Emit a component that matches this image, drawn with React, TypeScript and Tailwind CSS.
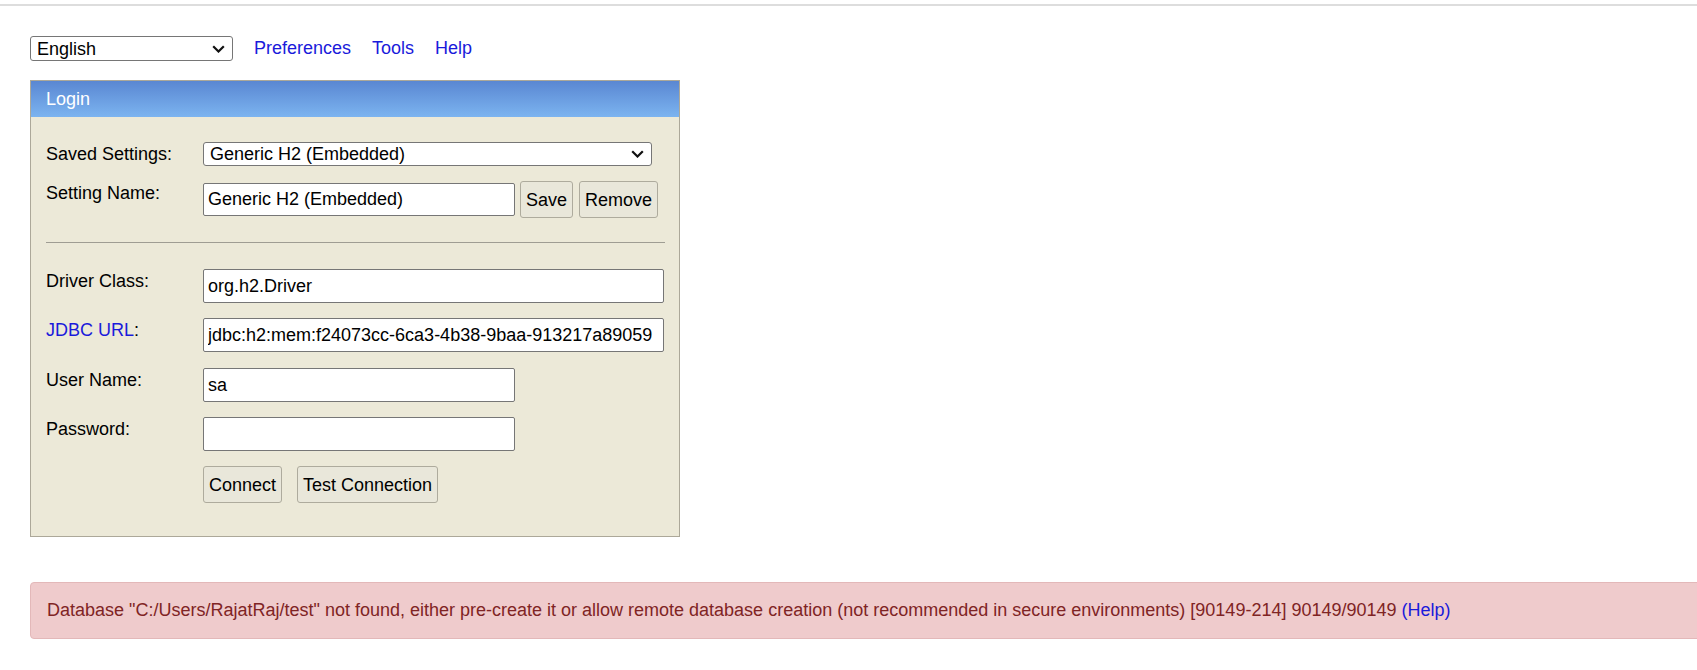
import { useState } from "react"

function Chevron() {
  return (
    <svg width="13" height="8" viewBox="0 0 13 8" className="shrink-0">
      <path d="M1.2 1.2 L6.5 6.5 L11.8 1.2" fill="none" stroke="#111" strokeWidth="2.2" />
    </svg>
  )
}

function FakeSelect({ value, className }: { value: string; className: string }) {
  return (
    <div
      className={`flex items-center justify-between bg-white border border-[#767676] rounded-[3px] pl-[6px] pr-[7px] text-black ${className}`}
    >
      <span className="leading-none">{value}</span>
      <Chevron />
    </div>
  )
}

function Field({ value, className }: { value: string; className: string }) {
  return (
    <input
      readOnly
      value={value}
      className={`bg-white border border-[#767676] rounded-[2px] px-[4px] h-[34px] text-black outline-none ${className}`}
    />
  )
}

function Btn({ label }: { label: string }) {
  return (
    <button className="h-[37px] px-[5px] bg-[#e9e7da] border border-[#aeab9d] rounded-[3px] text-black leading-none">
      {label}
    </button>
  )
}

function Row({ label, children, top }: { label: React.ReactNode; children: React.ReactNode; top?: string }) {
  return (
    <div className={`flex items-start ${top ?? ""}`}>
      <div className="w-[157px] shrink-0 pt-[2px] leading-[20px]">{label}</div>
      {children}
    </div>
  )
}

export default function App() {
  const [user] = useState("sa")

  return (
    <div className="w-[1697px] h-[670px] overflow-hidden bg-white text-[18px] text-black font-['Liberation_Sans',Arial,sans-serif]">
      <div className="mt-[4px] h-[2px] bg-[#dddddd]" />

      {/* toolbar */}
      <div className="mt-[30px] ml-[30px] flex items-center h-[25px]">
        <FakeSelect value="English" className="w-[203px] h-[25px]" />
        <div className="flex gap-[21px] ml-[21px] text-[#1a1adb]">
          <span>Preferences</span>
          <span>Tools</span>
          <span>Help</span>
        </div>
      </div>

      {/* login box */}
      <div className="mt-[19px] ml-[30px] w-[650px] border border-[#aca899] bg-[#ece9d8]">
        <div className="h-[36px] bg-gradient-to-b from-[#5a87d2] to-[#7cb4f0] text-white flex items-center px-[15px]">
          Login
        </div>

        <div className="px-[15px] pb-[33px]">
          <Row label="Saved Settings:" top="mt-[25px]">
            <FakeSelect value="Generic H2 (Embedded)" className="w-[449px] h-[24px]" />
          </Row>

          <Row label="Setting Name:" top="mt-[15px]">
            <div className="flex items-start">
              <Field value="Generic H2 (Embedded)" className="w-[312px] !h-[33px] mt-[2px]" />
              <div className="flex gap-[6px] ml-[5px]">
                <Btn label="Save" />
                <Btn label="Remove" />
              </div>
            </div>
          </Row>

          <div className="mt-[24px] h-[1px] w-[619px] bg-[#9f9d93]" />

          <Row label="Driver Class:" top="mt-[26px]">
            <Field value="org.h2.Driver" className="w-[462px]" />
          </Row>

          <Row
            label={
              <span>
                <span className="text-[#1a1adb]">JDBC URL</span>:
              </span>
            }
            top="mt-[15px]"
          >
            <Field value="jdbc:h2:mem:f24073cc-6ca3-4b38-9baa-913217a89059" className="w-[462px]" />
          </Row>

          <Row label="User Name:" top="mt-[16px]">
            <Field value={user} className="w-[312px]" />
          </Row>

          <Row label="Password:" top="mt-[15px]">
            <Field value="" className="w-[312px]" />
          </Row>

          <div className="mt-[15px] ml-[157px] flex gap-[15px]">
            <Btn label="Connect" />
            <Btn label="Test Connection" />
          </div>
        </div>
      </div>

      {/* error */}
      <div className="mt-[45px] ml-[30px] w-[1700px] h-[57px] flex items-center pl-[16px] bg-[#efcbcc] border border-[#e3b8b9] rounded-[4px] text-[#7f2424]">
        <span>
          Database "C:/Users/RajatRaj/test" not found, either pre-create it or allow remote database creation (not
          recommended in secure environments) [90149-214] 90149/90149{" "}
          <span className="text-[#1a1adb]">(Help)</span>
        </span>
      </div>
    </div>
  )
}
